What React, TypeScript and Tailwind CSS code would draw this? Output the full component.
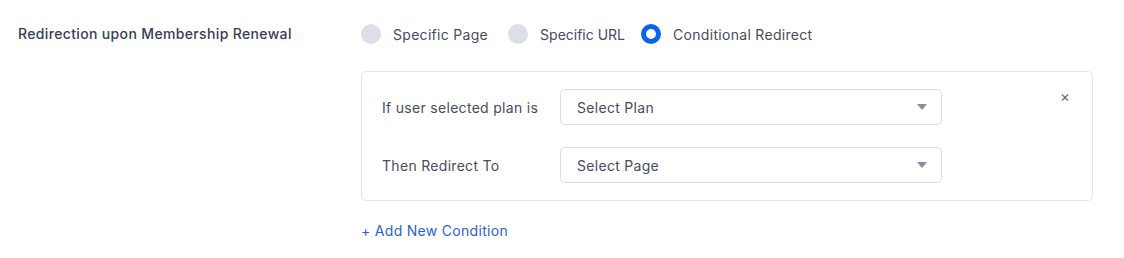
import React from "react";

function Radio({ checked, label, className = "", textClass = "tracking-[0.3px]" }: { checked?: boolean; label: string; className?: string; textClass?: string }) {
  return (
    <label className={`flex items-center gap-[12px] ${className}`}>
      {checked ? (
        <span className="box-border w-[20px] h-[20px] rounded-full border-[5px] border-[#0a63f0] bg-white" />
      ) : (
        <span className="w-[20px] h-[20px] rounded-full bg-[#dcdee8]" />
      )}
      <span className={`text-[14px] text-[#4a4b5c] ${textClass}`}>{label}</span>
    </label>
  );
}

function Select({ placeholder }: { placeholder: string }) {
  return (
    <div className="w-[382px] h-[36px] border border-[#dcdde3] rounded-[5px] flex items-center justify-between pl-[16px] pr-[14px]">
      <span className="text-[14px] text-[#4a4b5c] tracking-[0.3px]">{placeholder}</span>
      <svg width="10" height="6" viewBox="0 0 10 6">
        <path d="M0 0 L10 0 L5 6 Z" fill="#8c8aa6" />
      </svg>
    </div>
  );
}

export default function App() {
  return (
    <div
      className="w-[1124px] h-[258px] bg-white flex pt-[24px] pl-[18px]"
      style={{ fontFamily: "Inter, 'Open Sans', sans-serif" }}
    >
      <div className="w-[343px] text-[14px] font-medium text-[#3a3c52] leading-[20px] tracking-[0.35px]">
        Redirection upon Membership Renewal
      </div>
      <div className="flex flex-col">
        <div className="flex items-center h-[20px]">
          <Radio label="Specific Page" />
          <Radio label="Specific URL" className="ml-[20px]" textClass="tracking-normal" />
          <Radio checked label="Conditional Redirect" className="ml-[16px]" />
        </div>
        <div className="mt-[27px] w-[732px] h-[130px] border border-[#e4e5ea] rounded-[5px] relative pl-[20px] pt-[17px] flex flex-col gap-[22px]">
          <div className="flex items-center">
            <div className="w-[178px] text-[14px] text-[#4a4b5c] tracking-[0.3px]">If user selected plan is</div>
            <Select placeholder="Select Plan" />
          </div>
          <div className="flex items-center">
            <div className="w-[178px] text-[14px] text-[#4a4b5c] tracking-[0.3px]">Then Redirect To</div>
            <Select placeholder="Select Page" />
          </div>
          <button className="absolute right-[22px] top-[17px] text-[#6b6b7a] text-[15px] leading-none">×</button>
        </div>
        <div className="mt-[19px] text-[14px] text-[#2a62d4] tracking-[0.3px]">+ Add New Condition</div>
      </div>
    </div>
  );
}
